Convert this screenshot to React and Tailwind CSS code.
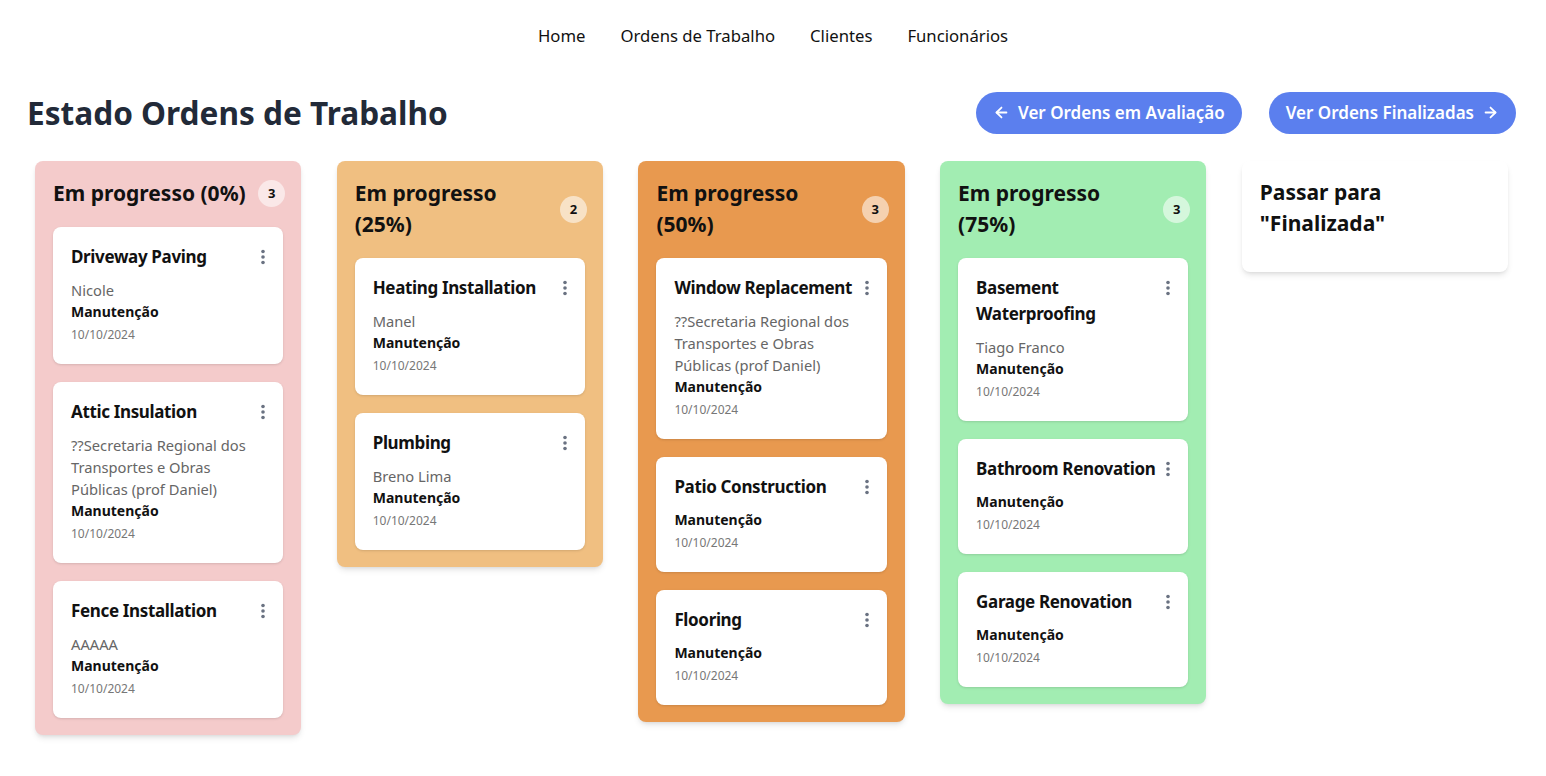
import { ArrowLeft, ArrowRight } from "lucide-react";

const columns = [
  {
    title: "Em progresso (0%)",
    bg: "bg-[#f4cbcb]",
    orders: [
      { title: "Driveway Paving", client: "Nicole" },
      { title: "Attic Insulation", client: "??Secretaria Regional dos Transportes e Obras Públicas (prof Daniel)" },
      { title: "Fence Installation", client: "AAAAA" },
    ],
  },
  {
    title: "Em progresso (25%)",
    bg: "bg-[#f0bf81]",
    orders: [
      { title: "Heating Installation", client: "Manel" },
      { title: "Plumbing", client: "Breno Lima" },
    ],
  },
  {
    title: "Em progresso (50%)",
    bg: "bg-[#e8994f]",
    orders: [
      { title: "Window Replacement", client: "??Secretaria Regional dos Transportes e Obras Públicas (prof Daniel)" },
      { title: "Patio Construction" },
      { title: "Flooring" },
    ],
  },
  {
    title: "Em progresso (75%)",
    bg: "bg-[#a2edb2]",
    orders: [
      { title: "Basement Waterproofing", client: "Tiago Franco" },
      { title: "Bathroom Renovation" },
      { title: "Garage Renovation" },
    ],
  },
];

const Dots = () => (
  <svg width="4" height="16" viewBox="0 0 4 16" className="shrink-0 mt-[5px] text-gray-500" fill="currentColor">
    <circle cx="2" cy="2.5" r="1.8" />
    <circle cx="2" cy="8" r="1.8" />
    <circle cx="2" cy="13.5" r="1.8" />
  </svg>
);

const OrderCard = ({ order }) => (
  <div className="bg-white rounded-lg shadow-sm px-[18px] pt-[17px] pb-[17px]">
    <div className="flex items-start justify-between gap-1">
      <h3 className="font-bold text-[17px] leading-[26px] tracking-[-0.35px] text-[#111]">{order.title}</h3>
      <Dots />
    </div>
    <div className="mt-[9px]">
      {order.client && <p className="text-[14.7px] leading-[22px] text-[#666]">{order.client}</p>}
      <p className="text-sm leading-[22px] font-bold text-[#111]">Manutenção</p>
      <p className="text-xs leading-[24px] text-[#777]">10/10/2024</p>
    </div>
  </div>
);

const Column = ({ col }) => (
  <div className={`${col.bg} rounded-lg shadow-md pt-[17px] pl-[18px] pr-[16px] pb-[17px] flex flex-col gap-[18px]`}>
    <div className="flex items-center justify-between gap-1">
      <h2 className="font-bold text-[21px] leading-[31px] text-[#111] max-w-[200px]">{col.title}</h2>
      <span className="w-[27px] h-[27px] rounded-full bg-white/55 flex items-center justify-center text-[13px] font-bold text-[#111] shrink-0">
        {col.orders.length}
      </span>
    </div>
    <div className="flex flex-col gap-[18px] mr-[2px]">
      {col.orders.map((o) => (
        <OrderCard key={o.title} order={o} />
      ))}
    </div>
  </div>
);

export default function App() {
  return (
    <div className="min-h-screen bg-white font-['Noto_Sans',sans-serif] text-[#111]">
      <nav className="flex justify-center gap-[35px] pt-[23px] pb-[41px] text-[16.7px]">
        <a>Home</a>
        <a>Ordens de Trabalho</a>
        <a>Clientes</a>
        <a>Funcionários</a>
      </nav>
      <div className="flex items-center justify-between pl-[27px] pr-[30px]">
        <h1 className="text-[31.6px] font-bold text-[#222a38]">Estado Ordens de Trabalho</h1>
        <div className="flex gap-[27px]">
          <button className="flex items-center gap-2 h-[42px] px-[17px] rounded-full bg-[#5b7fee] text-white font-semibold text-[17px]">
            <ArrowLeft size={17} strokeWidth={2.5} />
            Ver Ordens em Avaliação
          </button>
          <button className="flex items-center gap-2 h-[42px] px-[17px] rounded-full bg-[#5b7fee] text-white font-semibold text-[17px]">
            Ver Ordens Finalizadas
            <ArrowRight size={17} strokeWidth={2.5} />
          </button>
        </div>
      </div>
      <div className="grid grid-cols-5 gap-[35.5px] items-start pl-[35px] pr-[38px] mt-[25px] pb-10">
        {columns.map((c) => (
          <Column key={c.title} col={c} />
        ))}
        <div className="bg-white rounded-lg shadow-md px-[18px] pt-[16px] pb-[33px]">
          <h2 className="font-bold text-[21px] leading-[31px] text-[#111]">
            Passar para
            <br />
            "Finalizada"
          </h2>
        </div>
      </div>
    </div>
  );
}
